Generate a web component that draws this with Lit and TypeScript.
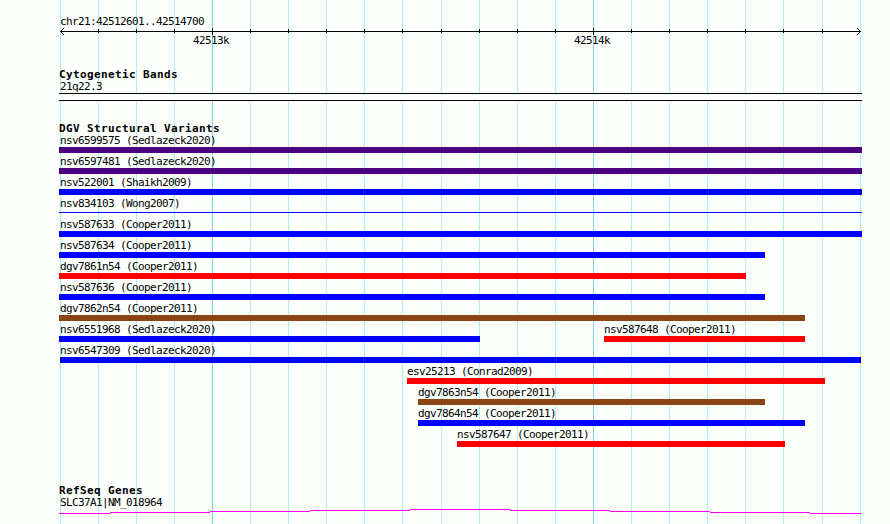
import { LitElement, html, svg, css } from "lit";
import { customElement, property } from "lit/decorators.js";
import { styleMap } from "lit/directives/style-map.js";

type Kind = "purple" | "blue" | "red" | "brown" | "thin";
interface Feature { name: string; start: number; end: number; kind: Kind; }

const ORIGIN = 59;
const GRID = [60, 98, 136, 174, 212, 250, 288, 326, 364, 402, 441, 479, 517, 555, 593, 631, 669, 707, 745, 783, 822, 860];
const MAJOR = [212, 593];

const f = (name: string, start: number, end: number, kind: Kind): Feature => ({ name, start, end, kind });

const ROWS: Feature[][] = [
  [f("nsv6599575 (Sedlazeck2020)", 59, 862, "purple")],
  [f("nsv6597481 (Sedlazeck2020)", 59, 862, "purple")],
  [f("nsv522001 (Shaikh2009)", 59, 862, "blue")],
  [f("nsv834103 (Wong2007)", 59, 862, "thin")],
  [f("nsv587633 (Cooper2011)", 59, 862, "blue")],
  [f("nsv587634 (Cooper2011)", 59, 765, "blue")],
  [f("dgv7861n54 (Cooper2011)", 59, 746, "red")],
  [f("nsv587636 (Cooper2011)", 59, 765, "blue")],
  [f("dgv7862n54 (Cooper2011)", 59, 805, "brown")],
  [f("nsv6551968 (Sedlazeck2020)", 59, 480, "blue"), f("nsv587648 (Cooper2011)", 604, 805, "red")],
  [f("nsv6547309 (Sedlazeck2020)", 60, 861, "blue")],
  [f("esv25213 (Conrad2009)", 407, 825, "red")],
  [f("dgv7863n54 (Cooper2011)", 418, 765, "brown")],
  [f("dgv7864n54 (Cooper2011)", 418, 805, "blue")],
  [f("nsv587647 (Cooper2011)", 457, 785, "red")],
];

const GENE: [number, number, number][] = [
  [59, 110, 4], [110, 210, 3], [210, 310, 2], [310, 410, 1], [410, 510, 0],
  [510, 610, 1], [610, 710, 2], [710, 810, 3], [810, 861, 4],
];

const text = css`
  .label {
    height: 12px;
    font: 11px/12px "DejaVu Sans Mono", monospace;
    letter-spacing: -0.622px;
    color: #000;
    white-space: pre;
  }
`;

@customElement("variant-row")
export class VariantRow extends LitElement {
  @property({ attribute: false }) features: Feature[] = [];

  static styles = [text, css`
    :host { display: grid; height: 21px; }
    .feature { grid-area: 1 / 1; }
    .label { width: 0; padding-left: 1px; }
    .flush { padding-left: 0; }
    .bar { height: 6px; }
    .purple { background: #4b0082; }
    .blue { background: #00f; }
    .red { background: #f00; }
    .brown { background: #8b4513; }
    .thin { height: 1px; margin-top: 2px; background: #00f; }
  `];

  render() {
    return this.features.map((v) => html`
      <div class="feature" style=${styleMap({ marginLeft: `${v.start - ORIGIN}px`, width: `${v.end - v.start}px` })}>
        <div class="label ${v.start > ORIGIN ? "flush" : ""}">${v.name}</div>
        <div class="bar ${v.kind}"></div>
      </div>`);
  }
}

@customElement("app-root")
export class AppRoot extends LitElement {
  static styles = [text, css`
    :host {
      display: block;
      position: relative;
      width: 890px;
      height: 524px;
      overflow: hidden;
      background: #fdfffc;
    }
    .grid { position: absolute; inset: 0; }
    .minor { fill: #afeeee; }
    .major { fill: #87ceeb; }
    .panel {
      position: relative;
      display: flex;
      flex-direction: column;
      width: 803px;
      padding: 16px 0 0 59px;
    }
    svg { display: block; }
    .ink { fill: #000; }
    .gene { fill: #f0f; }
    .inset { padding-left: 1px; }
    .scale { display: flex; padding-left: 134px; gap: 345px; }
    .scale .label { width: 36px; }
    .heading {
      height: 13px;
      font: bold 11px/13px "DejaVu Sans Mono", monospace;
      letter-spacing: 0.378px;
      white-space: pre;
    }
    .bands { margin-top: 21px; }
    .band {
      box-sizing: border-box;
      height: 8px;
      border: solid #000;
      border-width: 1px 0;
      background: #fff;
    }
    .variants { margin-top: 21px; }
    .genes { margin-top: 34px; }
  `];

  private px(x: number, y: number, w: number, h: number) {
    return svg`<rect class="ink" x=${x} y=${y} width=${w} height=${h}></rect>`;
  }

  render() {
    return html`
      <svg class="grid" width="890" height="524">
        ${GRID.map((x) => svg`<rect class=${MAJOR.includes(x) ? "major" : "minor"} x=${x} y="0" width="1" height="524"></rect>`)}
      </svg>
      <div class="panel">
        <div class="label inset">chr21:42512601..42514700</div>
        <svg width="803" height="7" viewBox="59 0 803 7" shape-rendering="crispEdges">
          ${this.px(60, 3, 801, 1)}
          ${GRID.slice(1, -1).map((x) => MAJOR.includes(x) ? this.px(x, 0, 1, 7) : this.px(x, 1, 1, 4))}
          ${[1, 2, 3].map((d) => [
            this.px(60 + d, 3 - d, 1, 1), this.px(60 + d, 3 + d, 1, 1),
            this.px(860 - d, 3 - d, 1, 1), this.px(860 - d, 3 + d, 1, 1),
          ])}
        </svg>
        <div class="scale">
          <div class="label">42513k</div>
          <div class="label">42514k</div>
        </div>
        <section class="bands">
          <div class="heading">Cytogenetic Bands</div>
          <div class="label inset">21q22.3</div>
          <div class="band"></div>
        </section>
        <section class="variants">
          <div class="heading">DGV Structural Variants</div>
          ${ROWS.map((r) => html`<variant-row .features=${r}></variant-row>`)}
        </section>
        <section class="genes">
          <div class="heading">RefSeq Genes</div>
          <div class="label inset">SLC37A1|NM_018964</div>
          <svg width="803" height="5" viewBox="59 0 803 5">
            ${GENE.map(([a, b, y]) => svg`<rect class="gene" x=${a} y=${y} width=${b - a} height="1"></rect>`)}
          </svg>
        </section>
      </div>`;
  }
}
